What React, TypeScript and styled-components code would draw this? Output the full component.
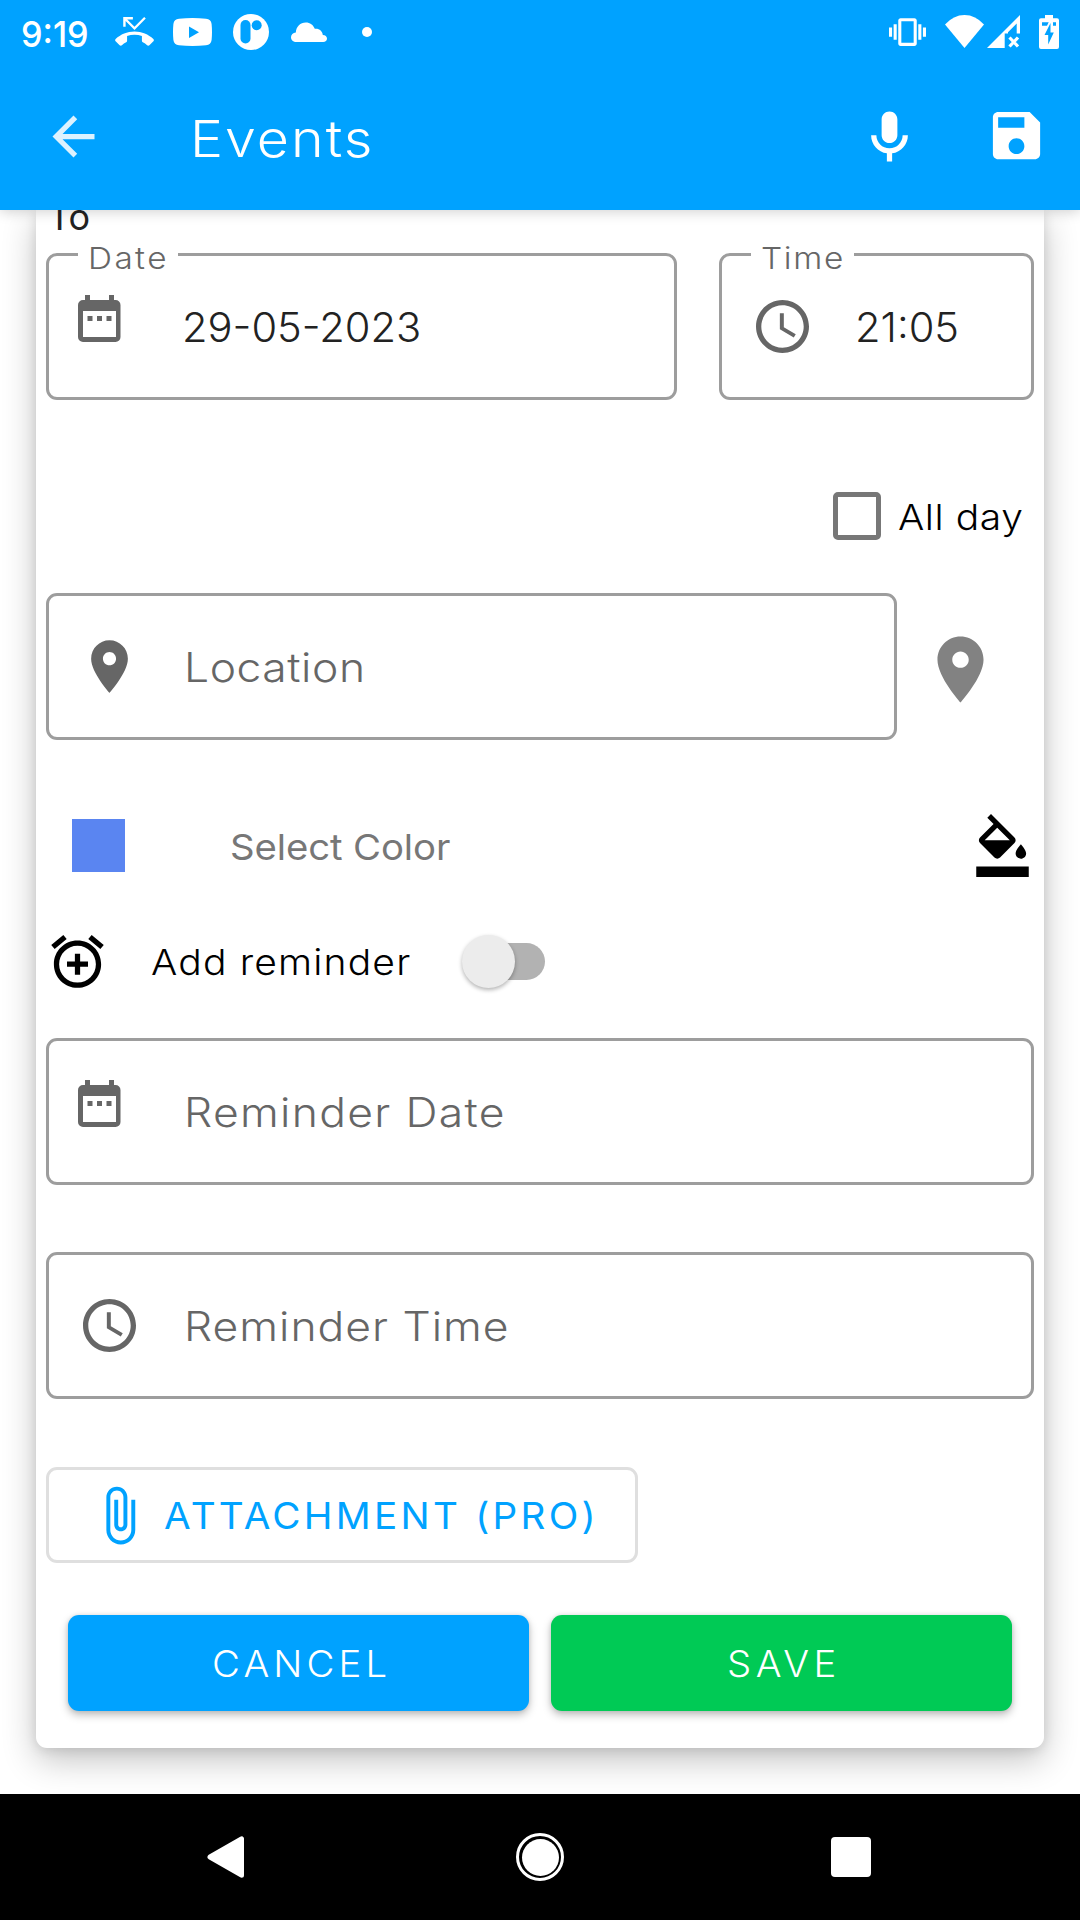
import React from 'react';
import styled, { createGlobalStyle } from 'styled-components';

const BLUE = '#00a2ff';
const GREEN = '#00ca55';
const HINT = '#666666';

const GlobalStyle = createGlobalStyle`
  * { box-sizing: border-box; }
  html, body { margin: 0; padding: 0; background: #fff; }
  body { font-family: Inter, "Open Sans", "Liberation Sans", sans-serif; font-weight: 300; }
  svg { display: block; flex: none; }
  button { font-family: inherit; }
`;

const Screen = styled.div`
  width: 1080px;
  height: 1920px;
  display: flex;
  flex-direction: column;
  overflow: hidden;
  background: #fff;
`;

const Header = styled.header`
  position: relative;
  z-index: 1;
  flex: none;
  height: 210px;
  background: ${BLUE};
  color: #fff;
  box-shadow: 0 2px 12px rgba(0, 0, 0, 0.18);
`;

const StatusBar = styled.div`
  height: 63px;
  display: flex;
  align-items: center;
  justify-content: space-between;
  padding: 0 21px 0 21px;
`;

const StatusGroup = styled.div`
  display: flex;
  align-items: center;
  height: 63px;
`;

const ClockText = styled.div`
  width: 94px;
  padding-top: 2px;
`;

const StatusIcon = styled.svg<{ $gap?: number }>`
  margin-left: ${p => p.$gap ?? 0}px;
  fill: #fff;
`;

const Toolbar = styled.div`
  height: 147px;
  display: flex;
  align-items: center;
  padding: 0 32px 0 42px;
`;

const Title = styled.div`
  flex: 1;
  margin-left: 84.5px;
  padding-top: 2px;
`;

const Text = styled.span<{
  $size: number;
  $weight?: number;
  $track?: number;
  $stretch?: number;
  $color?: string;
}>`
  display: inline-block;
  white-space: nowrap;
  line-height: 1.2;
  font-size: ${p => p.$size}px;
  font-weight: ${p => p.$weight ?? 300};
  letter-spacing: ${p => p.$track ?? 0}px;
  color: ${p => p.$color ?? 'inherit'};
  transform: translateY(1.5px) scaleX(${p => p.$stretch ?? 1});
  transform-origin: left center;
`;

const Content = styled.main`
  flex: none;
  height: 1584px;
  overflow: hidden;
  padding: 0 36px;
`;

const Card = styled.section`
  height: 1538px;
  padding: 0 10px;
  background: #fff;
  border-radius: 0 0 11px 11px;
  box-shadow: 0 12px 34px rgba(0, 0, 0, 0.24), 0 2px 12px rgba(0, 0, 0, 0.1);
  display: flex;
  flex-direction: column;
`;

const SectionLabel = styled.div`
  flex: none;
  height: 40px;
  margin: -14px 0 17px 2px;
  display: flex;
  align-items: center;
`;

const Row = styled.div<{ $top?: number; $height: number; $gap?: number }>`
  flex: none;
  display: flex;
  align-items: center;
  height: ${p => p.$height}px;
  margin-top: ${p => p.$top ?? 0}px;
  gap: ${p => p.$gap ?? 0}px;
`;

const Field = styled.div<{ $width?: number }>`
  position: relative;
  height: 147px;
  ${p => (p.$width ? `width: ${p.$width}px; flex: none;` : 'flex: 1;')}
  display: flex;
  align-items: center;
  border: 3px solid #9d9d9d;
  border-radius: 11px;
`;

const FloatingLabel = styled.div<{ $width: number }>`
  position: absolute;
  left: 29px;
  top: -20px;
  width: ${p => p.$width}px;
  height: 40px;
  padding-left: 10px;
  display: flex;
  align-items: center;
  background: #fff;
`;

const LeadSlot = styled.div<{ $left: number; $top?: number; $width?: number }>`
  width: ${p => p.$width ?? 134.5}px;
  height: 141px;
  flex: none;
  display: flex;
  align-items: ${p => (p.$top ? 'flex-start' : 'center')};
  padding-left: ${p => p.$left}px;
  padding-top: ${p => p.$top ?? 0}px;
`;

const CheckBox = styled.div`
  width: 48px;
  height: 48px;
  margin: 0 17px 0 787px;
  flex: none;
  border: 5.5px solid #777;
  border-radius: 5px;
`;

const PinButton = styled.div`
  margin: 5px 0 0 23.5px;
`;

const Swatch = styled.div`
  width: 53px;
  height: 53px;
  margin: 0 105px 0 26px;
  background: #5a85f1;
`;

const BucketIcon = styled.svg`
  margin-left: auto;
`;

const ReminderText = styled.div`
  width: 311.5px;
  margin-left: 41.5px;
`;

const Switch = styled.div`
  width: 83px;
  height: 53px;
  display: flex;
  align-items: center;
  position: relative;
`;

const SwitchTrack = styled.div`
  width: 70px;
  height: 37px;
  margin-left: 13px;
  border-radius: 19px;
  background: #b2b2b2;
`;

const SwitchThumb = styled.div`
  position: absolute;
  left: 0;
  top: 0;
  width: 53px;
  height: 53px;
  border-radius: 50%;
  background: #ececec;
  box-shadow: 0 2px 4px rgba(0, 0, 0, 0.3);
`;

const AttachmentButton = styled.button`
  flex: none;
  width: 592px;
  height: 96px;
  margin-top: 68px;
  padding: 0 0 0 39px;
  display: flex;
  align-items: center;
  gap: 13px;
  color: ${BLUE};
  background: #fff;
  border: 3px solid #dfdfdf;
  border-radius: 11px;
`;

const Actions = styled.div`
  flex: none;
  display: grid;
  grid-template-columns: 1fr 1fr;
  gap: 22px;
  margin-top: 52px;
  padding: 0 22px;
`;

const ActionButton = styled.button<{ $bg: string; $inset: number }>`
  height: 96px;
  padding: 0 0 0 ${p => p.$inset}px;
  text-align: left;
  border: 0;
  border-radius: 11px;
  background: ${p => p.$bg};
  color: #fff;
  box-shadow: 0 4px 8px rgba(0, 0, 0, 0.26), 0 0 4px rgba(0, 0, 0, 0.1);
`;

const NavBar = styled.nav`
  flex: none;
  height: 126px;
  display: flex;
  align-items: center;
  justify-content: space-between;
  padding: 0 209px 0 207px;
  background: #000;
`;

const HomeRing = styled.div`
  width: 48px;
  height: 48px;
  margin-left: 5px;
  padding: 2.5px;
  border: 3px solid #fff;
  border-radius: 50%;
  &::before {
    content: '';
    display: block;
    width: 37px;
    height: 37px;
    border-radius: 50%;
    background: #fff;
  }
`;

const RecentSquare = styled.div`
  width: 40px;
  height: 40px;
  border-radius: 4px;
  background: #fff;
`;

const PIN =
  'M12 2C8.13 2 5 5.13 5 9c0 5.25 7 13 7 13s7-7.75 7-13c0-3.87-3.13-7-7-7zm0 9.5c-1.38 0-2.5-1.12-2.5-2.5s1.12-2.5 2.5-2.5 2.5 1.12 2.5 2.5-1.12 2.5-2.5 2.5z';

const PinIcon = ({ size, color }: { size: number; color: string }) => (
  <svg width={size} height={size} viewBox="0 0 24 24" fill={color}>
    <path d={PIN} />
  </svg>
);

const CalendarIcon = () => (
  <svg width="43" height="47" viewBox="0 0 43 47" fill={HINT}>
    <path
      fillRule="evenodd"
      d="M7 0h5v5h19V0h5v5h1.500a5 5 0 0 1 5 5v32a5 5 0 0 1-5 5h-32.500a5 5 0 0 1-5-5v-32a5 5 0 0 1 5-5h2zM5 16v26h33V16z"
    />
    <path d="M9.500 21h5v5h-5zM19 21h5v5h-5zM28.500 21h5v5h-5z" />
  </svg>
);

const ClockIcon = () => (
  <svg width="53" height="53" viewBox="2 2 20 20" fill={HINT}>
    <path d="M11.990 2C6.470 2 2 6.480 2 12s4.470 10 9.990 10C17.520 22 22 17.520 22 12S17.520 2 11.990 2zM12 20c-4.420 0-8-3.580-8-8s3.580-8 8-8 8 3.580 8 8-3.580 8-8 8zm.5-13H11v6l5.250 3.150.750-1.230-4.500-2.670z" />
  </svg>
);

export default function App() {
  return (
    <>
      <GlobalStyle />
      <Screen>
        <Header>
          <StatusBar>
            <StatusGroup>
              <ClockText>
                <Text $size={36} $weight={500} $stretch={0.95}>9:19</Text>
              </ClockText>
              <StatusIcon width="39" height="29" viewBox="0 3 24 18">
                <path d="M6.500 5.500L12 11l7-7-1-1-6 6-4.500-4.500H11V3H5v6h1.500V5.500zm17.210 11.170C20.660 13.780 16.540 12 12 12 7.460 12 3.340 13.780.290 16.670c-.180.180-.290.430-.290.710 0 .280.110.530.290.710l2.480 2.480c.180.180.430.290.710.290.270 0 .520-.110.700-.280.790-.740 1.690-1.360 2.660-1.850.330-.160.560-.5.560-.9v-3.100c1.450-.480 3-.730 4.600-.730 1.600 0 3.150.250 4.600.720v3.100c0 .390.230.740.560.9.980.490 1.870 1.120 2.670 1.850.180.180.430.280.7.280.280 0 .530-.110.710-.290l2.480-2.480c.180-.180.290-.430.290-.710 0-.280-.120-.520-.3-.7z" />
              </StatusIcon>
              <StatusIcon $gap={19} width="39" height="28" viewBox="0 0 39 28">
                <path
                  fillRule="evenodd"
                  d="M6 .8Q19.500-.8 33 .8Q38 1.200 38.600 6Q39.400 14 38.600 22Q38 26.800 33 27.200Q19.500 28.800 6 27.200Q1 26.800.4 22Q-.4 14 .4 6Q1 1.200 6 .8zM16 8.500v11.500l10-5.750z"
                />
              </StatusIcon>
              <StatusIcon $gap={21} width="36" height="36" viewBox="0 0 36 36">
                <circle cx="18" cy="18" r="18" />
                <rect x="7.500" y="6" width="10" height="23.500" rx="5" fill={BLUE} />
                <circle cx="23.700" cy="11.300" r="5" fill={BLUE} />
              </StatusIcon>
              <StatusIcon $gap={22} width="36" height="20" viewBox="0 0 36 20">
                <path d="M5.500 20C2.300 20 0 17.900 0 15.200 0 12.500 2 10.600 4.800 10.400 5.300 4.500 9.300.5 14.800.5c4.200 0 7.500 2.300 9 6.300 4.600-.5 7.500 2.200 8 6.100 2.600.1 4.200 1.500 4.200 3.600 0 2-1.500 3.500-3.900 3.500z" />
              </StatusIcon>
              <StatusIcon $gap={35} width="10" height="10" viewBox="0 0 10 10">
                <circle cx="5" cy="5" r="5" />
              </StatusIcon>
            </StatusGroup>
            <StatusGroup>
              <StatusIcon width="37" height="28" viewBox="0 3 24 18">
                <path d="M0 15h2V9H0v6zm3 2h2V7H3v10zm19-8v6h2V9h-2zm-3 8h2V7h-2v10zM16.500 3h-9C6.670 3 6 3.670 6 4.500v15c0 .830.670 1.500 1.500 1.500h9c.830 0 1.500-.670 1.500-1.500v-15c0-.830-.670-1.500-1.500-1.500zM16 19H8V5h8v14z" />
              </StatusIcon>
              <StatusIcon $gap={19} width="39" height="33" viewBox="0 0 39 33">
                <path d="M19.500 33L0 9.500Q8.500 0 19.500 0T39 9.500z" />
              </StatusIcon>
              <StatusIcon $gap={3} width="33" height="33" viewBox="0 0 33 33">
                <path d="M0 33L33 0v18.500h-3.300V8.500L21 17.200V18.500h-3.300V33z" />
                <path d="M22.500 22.500l8.500 9M31 22.500l-8.500 9" stroke="#fff" strokeWidth="3.200" />
              </StatusIcon>
              <StatusIcon $gap={19} width="20" height="34" viewBox="0 0 20 34">
                <path
                  fillRule="evenodd"
                  d="M6 0h8v3.300h4a2 2 0 0 1 2 2V32a2 2 0 0 1-2 2H2a2 2 0 0 1-2-2V5.300a2 2 0 0 1 2-2h4zM3 7.300v3.500h5l1.700-3.500zM14 7.300v3.500h3V7.300zM11.500 8L5.500 20h3.700v9.500L14.800 17.500H11.500z"
                />
              </StatusIcon>
            </StatusGroup>
          </StatusBar>
          <Toolbar>
            <svg width="63" height="63" viewBox="0 0 24 24" fill="#dcf2ff">
              <path d="M20 11H7.830l5.590-5.590L12 4l-8 8 8 8 1.410-1.410L7.830 13H20v-2z" />
            </svg>
            <Title>
              <Text $size={50.5} $track={1.8} $stretch={1.1}>Events</Text>
            </Title>
            <svg width="63" height="63" viewBox="0 -0.500 24 24" fill="#fff">
              <path d="M12 14c1.660 0 3-1.340 3-3V5c0-1.660-1.340-3-3-3S9 3.340 9 5v6c0 1.660 1.340 3 3 3zM17 11c0 2.760-2.240 5-5 5s-5-2.240-5-5H5c0 3.530 2.610 6.430 6 6.920V21h2v-3.080c3.390-.490 6-3.390 6-6.920h-2z" />
            </svg>
            <svg width="127" height="63" viewBox="-24.400 0.300 48.400 24" fill="#fff">
              <path d="M17 3H5c-1.110 0-2 .9-2 2v14c0 1.100.890 2 2 2h14c1.100 0 2-.9 2-2V7l-4-4zm-5 16c-1.660 0-3-1.340-3-3s1.340-3 3-3 3 1.340 3 3-1.340 3-3 3zm3-10H5V5h10v4z" />
            </svg>
          </Toolbar>
        </Header>

        <Content>
          <Card>
            <SectionLabel>
              <Text $size={36} $weight={400} $color="#222">To</Text>
            </SectionLabel>

            <Row $height={147} $gap={42}>
              <Field>
                <FloatingLabel $width={100}>
                  <Text $size={30.3} $track={2.2} $stretch={1.1} $color={HINT}>Date</Text>
                </FloatingLabel>
                <LeadSlot $left={29} $top={39} $width={133}>
                  <CalendarIcon />
                </LeadSlot>
                <Text $size={40.4} $stretch={1.03} $color="#222">29-05-2023</Text>
              </Field>
              <Field $width={315}>
                <FloatingLabel $width={103}>
                  <Text $size={30.3} $track={1.5} $stretch={1.1} $color={HINT}>Time</Text>
                </FloatingLabel>
                <LeadSlot $left={34} $width={133}>
                  <ClockIcon />
                </LeadSlot>
                <Text $size={40.4} $stretch={1.03} $color="#222">21:05</Text>
              </Field>
            </Row>

            <Row $top={92} $height={48}>
              <CheckBox />
              <Text $size={35.5} $track={0.5} $stretch={1.1} $color="#000">All day</Text>
            </Row>

            <Row $top={53} $height={147}>
              <Field $width={851}>
                <LeadSlot $left={29}>
                  <PinIcon size={63} color={HINT} />
                </LeadSlot>
                <Text $size={40.4} $track={0.5} $stretch={1.1} $color={HINT}>Location</Text>
              </Field>
              <PinButton>
                <PinIcon size={79} color="#828282" />
              </PinButton>
            </Row>

            <Row $top={74} $height={63}>
              <Swatch />
              <Text $size={36} $weight={400} $track={-0.1} $stretch={1.065} $color="#777">Select Color</Text>
              <BucketIcon width="63" height="63" viewBox="0 0 24 24" fill="#000">
                <path d="M16.560 8.940L7.620 0 6.210 1.410l2.380 2.380-5.150 5.150c-.590.590-.590 1.540 0 2.120l5.500 5.500c.290.290.680.440 1.060.440s.770-.150 1.060-.440l5.500-5.500c.590-.580.590-1.530 0-2.120zM5.210 10L10 5.210 14.790 10H5.210zM19 11.500s-2 2.170-2 3.500c0 1.100.9 2 2 2s2-.9 2-2c0-1.330-2-3.500-2-3.500zM2 20h20v4H2v-4z" />
              </BucketIcon>
            </Row>

            <Row $top={53} $height={63}>
              <svg width="63" height="63" viewBox="0 0 24 24" fill="#000">
                <path d="M7.880 3.390L6.600 1.860 2 5.710l1.290 1.530 4.590-3.850zM22 5.720l-4.600-3.860-1.290 1.530 4.600 3.860L22 5.720zM12 4c-4.970 0-9 4.030-9 9s4.020 9 9 9c4.970 0 9-4.030 9-9s-4.030-9-9-9zm0 16c-3.870 0-7-3.130-7-7s3.130-7 7-7 7 3.130 7 7-3.130 7-7 7zm1-11h-2v3H8v2h3v3h2v-3h3v-2h-3V9z" />
              </svg>
              <ReminderText>
                <Text $size={35.5} $track={1.05} $stretch={1.1} $color="#000">Add reminder</Text>
              </ReminderText>
              <Switch>
                <SwitchTrack />
                <SwitchThumb />
              </Switch>
            </Row>

            <Row $top={45} $height={147}>
              <Field>
                <LeadSlot $left={29} $top={39}>
                  <CalendarIcon />
                </LeadSlot>
                <Text $size={40.4} $track={1.2} $stretch={1.1} $color={HINT}>Reminder Date</Text>
              </Field>
            </Row>

            <Row $top={67} $height={147}>
              <Field>
                <LeadSlot $left={34}>
                  <ClockIcon />
                </LeadSlot>
                <Text $size={40.4} $track={0.9} $stretch={1.1} $color={HINT}>Reminder Time</Text>
              </Field>
            </Row>

            <AttachmentButton>
              <svg width="63" height="63" viewBox="0 0 24 24" fill={BLUE}>
                <path d="M16.500 6v11.500c0 2.210-1.790 4-4 4s-4-1.790-4-4V5c0-1.380 1.120-2.500 2.500-2.500s2.500 1.120 2.500 2.500v10.500c0 .550-.450 1-1 1s-1-.450-1-1V6H10v9.500c0 1.380 1.120 2.500 2.500 2.500s2.500-1.120 2.500-2.500V5c0-2.210-1.790-4-4-4S7 2.790 7 5v12.500c0 3.040 2.460 5.500 5.500 5.500s5.500-2.460 5.500-5.500V6h-1.500z" />
              </svg>
              <Text $size={36.5} $weight={400} $track={3.05} $stretch={1.06}>ATTACHMENT (PRO)</Text>
            </AttachmentButton>

            <Actions>
              <ActionButton $bg={BLUE} $inset={144}>
                <Text $size={36.5} $track={3.9} $stretch={1.05}>CANCEL</Text>
              </ActionButton>
              <ActionButton $bg={GREEN} $inset={175.5}>
                <Text $size={36.5} $track={4.2} $stretch={1.05}>SAVE</Text>
              </ActionButton>
            </Actions>
          </Card>
        </Content>

        <NavBar>
          <svg width="37" height="42" viewBox="0 0 37 42" fill="#fff" stroke="#fff" strokeWidth="5" strokeLinejoin="round">
            <path d="M34.500 2.800v36.400L3 21z" />
          </svg>
          <HomeRing />
          <RecentSquare />
        </NavBar>
      </Screen>
    </>
  );
}
